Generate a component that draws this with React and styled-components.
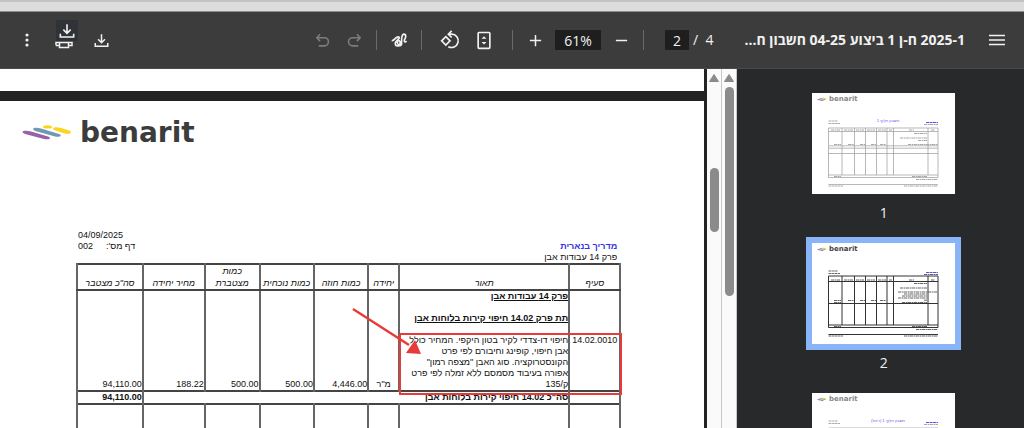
import React from "react";
import styled, { createGlobalStyle } from "styled-components";

const Global = createGlobalStyle`
  *, *::before, *::after { box-sizing: border-box; }
  body { margin: 0; background: #28292a; }
  button { font: inherit; color: inherit; background: none; border: 0; padding: 0; cursor: pointer; }
`;

const Viewer = styled.div`
  display: flex;
  flex-direction: column;
  height: 100vh;
  overflow: hidden;
  font-family: "Open Sans", "Liberation Sans", sans-serif;
`;

const WindowStrip = styled.div`
  flex: none;
  height: 12px;
  background: #dcdcdc;
  border-top: 2px solid #c3c3c3;
  border-bottom: 1px solid #8c8c8c;
`;

const Toolbar = styled.header`
  flex: none;
  display: flex;
  align-items: center;
  justify-content: space-between;
  height: 57px;
  padding: 0 15px;
  background: #3c3c3c;
  border-bottom: 1px solid #4a4a4a;
  color: #f1f1f1;
`;

const Group = styled.div`
  display: flex;
  align-items: center;
  gap: ${(p) => p.$gap || 0}px;
  margin: 0 ${(p) => p.$inset || 0}px;
`;

const IconButton = styled.button`
  position: relative;
  display: flex;
  align-items: center;
  justify-content: center;
  width: 24px;
  height: 24px;
  color: ${(p) => (p.disabled ? "#7c7c7c" : "#f1f1f1")};
`;

const Badge = styled.span`
  position: absolute;
  left: 4px;
  bottom: 11px;
  display: flex;
  align-items: center;
  justify-content: center;
  width: 22px;
  height: 21px;
  background: #2f3338;
`;

const Separator = styled.span`
  width: 1px;
  height: 20px;
  background: #6a6a6a;
`;

const NumberBox = styled.input`
  width: ${(p) => p.$width}px;
  height: 20px;
  padding: 0;
  border: 0;
  background: #1e1e1e;
  color: #f1f1f1;
  font: 14px "Open Sans", sans-serif;
  text-align: center;
`;

const PageCount = styled.span`
  font-size: 14px;
  line-height: 20px;
  white-space: pre;
`;

const FileTitle = styled.h1`
  margin: 0 10px;
  font-size: 14px;
  font-weight: 700;
  line-height: 20px;
  white-space: nowrap;
`;

const Body = styled.div`
  flex: 1;
  display: flex;
  min-height: 0;
`;

const Canvas = styled.main`
  flex: 1;
  display: flex;
  flex-direction: column;
  gap: 10px;
  min-width: 0;
  padding-right: 3px;
  overflow: hidden;
  background: #232324;
`;

const PreviousSheet = styled.div`
  flex: none;
  height: 22px;
  background: #fff;
`;

const Sheet = styled.article`
  flex: none;
  padding: 20px 83px 0 76px;
  background: #fff;
  color: #111;
  font: 9px/11px "Liberation Sans", Arial, sans-serif;
`;

const Brand = styled.div`
  display: flex;
  align-items: center;
  gap: 7px;
  height: 24px;
  margin-left: -54px;
  color: #3c3c3c;
  font: bold 28px/24px "DejaVu Sans", sans-serif;
`;

const Meta = styled.div`
  display: flex;
  justify-content: space-between;
  margin-top: 85px;
  padding: 0 4px 0 2px;
`;

const MetaBlock = styled.div`
  display: flex;
  flex-direction: column;
  justify-content: ${(p) => (p.$end ? "flex-end" : "flex-start")};
  height: 33px;
`;

const ProjectName = styled.strong`
  color: #3333e6;
`;

const PageLine = styled.span`
  display: flex;
  justify-content: flex-end;
  gap: 13px;
`;

const TableArea = styled.section`
  position: relative;
`;

const Table = styled.table`
  width: 100%;
  table-layout: fixed;
  border-collapse: collapse;
  border-top: 2px solid #444;
`;

const Col = styled.col`
  width: ${(p) => p.$share}%;
`;

const HeadCell = styled.th`
  height: 26px;
  padding: 0;
  border: solid #666;
  border-width: 0 2px 2px;
  border-bottom-color: #444;
  font-weight: normal;
  font-style: italic;
  line-height: 12px;
  vertical-align: bottom;
`;

const Cell = styled.td`
  height: ${(p) => p.$height}px;
  padding: 0;
  border: solid #666;
  border-width: 0 2px;
  text-align: ${(p) => p.$align || "right"};
  vertical-align: ${(p) => p.$valign || "bottom"};
  font-weight: ${(p) => (p.$bold ? "bold" : "normal")};
  text-decoration: ${(p) => (p.$underline ? "underline" : "none")};
  white-space: nowrap;
`;

const TotalRow = styled.tr`
  border: solid #444;
  border-width: 2px 0;
`;

const Highlight = styled.div`
  position: absolute;
  top: 70px;
  right: -1px;
  width: 41%;
  height: 62px;
  border: 2px solid #e93a3a;
`;

const Arrow = styled.svg`
  position: absolute;
  top: 42px;
  right: 198px;
`;

const Scrollbar = styled.div`
  flex: none;
  display: flex;
  flex-direction: column;
  align-items: center;
  width: 15px;
  padding-top: 5px;
  background: #fafafa;
  border-right: 1px solid #c8c8c8;
`;

const ScrollThumb = styled.div`
  width: 9px;
  height: ${(p) => p.$size}px;
  margin-top: ${(p) => p.$offset}px;
  border-radius: 5px;
  background: #8b8b8b;
`;

const Sidebar = styled.nav`
  flex: none;
  display: flex;
  flex-direction: column;
  align-items: center;
  gap: 11px;
  width: 28%;
  padding: 18px 0 0 6px;
  overflow: hidden;
  background: #28292a;
`;

const ThumbButton = styled.button`
  flex: none;
  display: flex;
  flex-direction: column;
  align-items: center;
  color: #f1f1f1;
  font-size: 14px;
  line-height: 26px;
`;

const ThumbFrame = styled.span`
  display: flex;
  border: 6px solid ${(p) => (p.$active ? "#8ab4f8" : "transparent")};
`;

function Icon({ size = 20, children, width = 2 }) {
  return (
    <svg width={size} height={size} viewBox="0 0 24 24" fill="none" stroke="currentColor" strokeWidth={width} aria-hidden="true">
      {children}
    </svg>
  );
}

const DownloadPaths = () => <path d="M12 2v13M6.500 10l5.500 5.500 5.500-5.500M2 16v5h20V16" />;

function BrandMark() {
  return (
    <svg width="51" height="16" viewBox="0 0 51 16" aria-hidden="true">
      <path d="M0.500 7C1 5.500 5 5.500 9 6.500L26 11.500C30 13 28 15 22 14L5 9.500C2 8.700 0.500 8 0.500 7z" fill="#9561ab" />
      <path d="M11 4C11.500 2.500 15.500 2.500 19 3.500L37 9C41 10.500 38 12.500 33 11.500L16 6.800C13 6 11 5 11 4z" fill="#6f98b3" />
      <path d="M31 3.500C31.500 2 35.500 2 39 3L47 5.500C51 7 49 9.500 43 8.500L35 6C32.500 5.200 31 4.500 31 3.500z" fill="#fbd51c" />
      <ellipse cx="25.500" cy="1.900" rx="4.500" ry="1.700" fill="#fbd51c" />
    </svg>
  );
}

function ScrollArrow() {
  return (
    <svg width="10" height="8" viewBox="0 0 10 8" aria-hidden="true">
      <path d="M5 0.500L9.500 7.500h-9z" fill="#8b8b8b" stroke="#8b8b8b" strokeLinejoin="round" />
    </svg>
  );
}

const columnLines = [16.5, 30, 42.5, 53.5, 64.5, 75, 81.5, 116, 126];

function MiniPage({ variant }) {
  const strong = variant === 2;
  const line = strong ? "#333" : "#999";
  const top = strong ? 33 : 35;
  return (
    <svg width="143" height="101" viewBox="0 0 143 101" aria-hidden="true">
      <rect width="143" height="101" fill="#fff" />
      <g strokeWidth="1" strokeLinecap="round">
        <path d="M6 6.500l5 1" stroke="#9561ab" />
        <path d="M8 5.500l5 1" stroke="#6f98b3" />
        <path d="M11 5l3 1" stroke="#fbd51c" />
      </g>
      <text x="17" y="8" fontFamily="DejaVu Sans" fontWeight="bold" fontSize="7" fill={strong ? "#444" : "#888"}>benarit</text>
      {!strong && (
        <text x="76" y="29" textAnchor="middle" fontFamily="Liberation Sans" fontSize="4" fill="#5555ee">
          {variant === 1 ? "חשבון חלקי 1" : "חשבון חלקי 1 (ריכוז)"}
        </text>
      )}
      <g stroke={line} fill="none" strokeWidth={strong ? 1 : 0.7}>
        <path d={`M16.500 ${top}H126M16.500 38.500H126M16.500 60.500H126M16.500 82H126M16.500 84.500H126M16.500 91.500H126`} />
        {!strong && <path d="M16.500 52.800H126M16.500 55.200H126" />}
        {columnLines.map((x) => <path key={x} d={`M${x} ${top}V${x === 16.5 || x === 126 ? 84.5 : 82}`} />)}
      </g>
      <g stroke={strong ? "#666" : "#aaa"} strokeWidth="1" strokeDasharray="3 .6 2 .4">
        <path d="M16.500 28H26M16.500 30.500H28M112 31.500H126M19 37H28M32 37H41M44 37H52M55 37H63M66 37H74M77 37H80M97 37H102M119 37H123" />
        <path d="M102 40.500H115M88 45H115M100 83.500H115M22 83.500H29M104 86.500H126M16.500 93H31M92 93H126" />
        {strong
          ? <path d="M86 49H125M92 51H115M90 53H115M86 55H115M112 57.200H115M22 57.500H29M36 57.500H42M48 57.500H53M59 57.500H64M68 57.500H74M90 59.500H115M22 59.500H29" />
          : <path d="M106 47.500H115M22 51.500H29M36 51.500H42M48 51.500H53M59 51.500H64M68 51.500H74M96 51.500H126" />}
      </g>
      <path d="M114 29.500H126" stroke="#5555ee" strokeDasharray="3 .5" />
    </svg>
  );
}

const columns = [
  { label: "סעיף", share: 9.4 },
  { label: "תאור", share: 31.3 },
  { label: "יחידה", share: 5.7 },
  { label: "כמות חוזה", share: 10 },
  { label: "כמות נוכחית", share: 10 },
  { label: "כמות מצטברת", share: 10.1 },
  { label: "מחיר יחידה", share: 11.4 },
  { label: 'סה"כ מצטבר', share: 12.1 },
];

const emptyCells = (count, height) =>
  Array.from({ length: count }, (_, i) => <Cell key={i} $height={height} />);

function QuantityTable() {
  return (
    <Table dir="rtl">
      <colgroup>{columns.map((c) => <Col key={c.label} $share={c.share} />)}</colgroup>
      <thead>
        <tr>
          {columns.map((c) => (
            <HeadCell key={c.label} scope="col">
              {c.label === "כמות מצטברת" ? <>כמות<br />מצטברת</> : c.label}
            </HeadCell>
          ))}
        </tr>
      </thead>
      <tbody>
        <tr>
          <Cell $height={23} />
          <Cell $bold $underline $valign="top">פרק 14 עבודות אבן</Cell>
          {emptyCells(6, 23)}
        </tr>
        <tr>
          <Cell $height={22} />
          <Cell $bold $underline $valign="top">תת פרק 14.02 חיפוי קירות בלוחות אבן</Cell>
          {emptyCells(6, 22)}
        </tr>
        <tr>
          <Cell $height={55} $valign="top" $align="center">14.02.0010</Cell>
          <Cell>
            חיפוי דו-צדדי לקיר בטון היקפי. המחיר כולל<br />
            אבן חיפוי, קופינג וחיבורם לפי פרט<br />
            הקונסטרוקציה. סוג האבן "מצפה רמון"<br />
            אפורה בעיבוד מסמסם ללא זמלה לפי פרט<br />
            ק/135
          </Cell>
          <Cell $align="center">מ"ר</Cell>
          <Cell>4,446.00</Cell>
          <Cell>500.00</Cell>
          <Cell>500.00</Cell>
          <Cell>188.22</Cell>
          <Cell>94,110.00</Cell>
        </tr>
        <TotalRow>
          <Cell $height={12} />
          <Cell $bold colSpan={6}>סה"כ 14.02 חיפוי קירות בלוחות אבן</Cell>
          <Cell $bold>94,110.00</Cell>
        </TotalRow>
        <tr>{emptyCells(8, 120)}</tr>
      </tbody>
    </Table>
  );
}

export default function App() {
  return (
    <Viewer>
      <Global />
      <WindowStrip />
      <Toolbar>
        <Group $gap={13}>
          <IconButton aria-label="More">
            <svg width="4" height="14" viewBox="0 0 4 14" fill="currentColor" aria-hidden="true">
              <circle cx="2" cy="2" r="1.600" /><circle cx="2" cy="7" r="1.600" /><circle cx="2" cy="12" r="1.600" />
            </svg>
          </IconButton>
          <IconButton aria-label="Print">
            <svg width="18" height="18" viewBox="0 0 18 18" fill="none" stroke="currentColor" strokeWidth="1.500" aria-hidden="true">
              <path d="M1 14.500V11.500H17V14.500H14M1 14.500H4M4.500 11.500h9v5h-9z" />
            </svg>
            <Badge><Icon size={16} width={2.400}><DownloadPaths /></Icon></Badge>
          </IconButton>
          <IconButton aria-label="Download"><Icon size={15} width={2.400}><DownloadPaths /></Icon></IconButton>
        </Group>
        <Group $gap={10}>
          <Group $gap={8}>
            <IconButton aria-label="Undo" disabled><Icon size={15} width={2.600}><path d="M8 2L3 7.500l5 5.500M3 7.500h12a5.500 5.500 0 0 1 0 13H6" /></Icon></IconButton>
            <IconButton aria-label="Redo" disabled><Icon size={15} width={2.600}><path d="M16 2l5 5.500-5 5.500M21 7.500H9a5.500 5.500 0 0 0 0 13h9" /></Icon></IconButton>
          </Group>
          <Separator />
          <IconButton aria-label="Draw">
            <Icon size={17} width={2.400}><path d="M1 12c4 1 6-7 10-5 3 2-5 5-5 9 0 5 6 5 7 0 0-5-5-5-4-1 1 5 6 6 6 1s-1-12 3-13c4 0 3 5 1 8-1 3 1 4 3 2" /></Icon>
          </IconButton>
          <Separator />
          <Group $gap={10} $inset={6}>
            <IconButton aria-label="Rotate">
              <Icon size={20}><path d="M7 8l5 5-5 5-5-5zM11 5h3a8 8 0 1 1-4 15M14 1l-4 4 4 4" /></Icon>
            </IconButton>
            <IconButton aria-label="Fit to page">
              <Icon size={20}>
                <rect x="5" y="3" width="14" height="19" rx="1" />
                <path d="M9 10.500l3-3 3 3zM9 14.500l3 3 3-3z" fill="currentColor" stroke="none" />
              </Icon>
            </IconButton>
          </Group>
          <Separator />
          <Group $gap={8}>
            <IconButton aria-label="Zoom in"><Icon size={15} width={2.400}><path d="M12 3v18M3 12h18" /></Icon></IconButton>
            <NumberBox $width={46} aria-label="Zoom level" defaultValue="61%" />
            <IconButton aria-label="Zoom out"><Icon size={15} width={2.400}><path d="M3 12h18" /></Icon></IconButton>
          </Group>
          <Separator />
          <Group $gap={4} $inset={11}>
            <NumberBox $width={24} aria-label="Page number" defaultValue="2" />
            <PageCount>/  4</PageCount>
          </Group>
          <FileTitle dir="rtl">2025-1 ח-ן 1 ביצוע 04-25 חשבון ח...</FileTitle>
          <IconButton aria-label="Menu">
            <svg width="16" height="12" viewBox="0 0 16 12" stroke="currentColor" strokeWidth="1.500" aria-hidden="true">
              <path d="M0 1.500h16M0 6h16M0 10.500h16" />
            </svg>
          </IconButton>
        </Group>
      </Toolbar>
      <Body>
        <Canvas>
          <PreviousSheet />
          <Sheet>
            <Brand><BrandMark />benarit</Brand>
            <Meta>
              <MetaBlock>
                <span>04/09/2025</span>
                <PageLine dir="rtl"><span>דף מס':</span><span>002</span></PageLine>
              </MetaBlock>
              <MetaBlock $end dir="rtl">
                <ProjectName>מדריך בנארית</ProjectName>
                <span>פרק 14 עבודות אבן</span>
              </MetaBlock>
            </Meta>
            <TableArea>
              <QuantityTable />
              <Highlight />
              <Arrow width="74" height="52" viewBox="0 0 74 52" aria-hidden="true">
                <path d="M4 4L60 40" stroke="#e93a3a" strokeWidth="2.400" />
                <path d="M72 49L57 48L66 35z" fill="#e93a3a" />
              </Arrow>
            </TableArea>
          </Sheet>
        </Canvas>
        <Scrollbar><ScrollArrow /><ScrollThumb $offset={86} $size={64} /></Scrollbar>
        <Scrollbar><ScrollArrow /><ScrollThumb $offset={5} $size={209} /></Scrollbar>
        <Sidebar>
          {[1, 2, 3].map((n) => (
            <ThumbButton key={n}>
              <ThumbFrame $active={n === 2}><MiniPage variant={n} /></ThumbFrame>
              {n}
            </ThumbButton>
          ))}
        </Sidebar>
      </Body>
    </Viewer>
  );
}
